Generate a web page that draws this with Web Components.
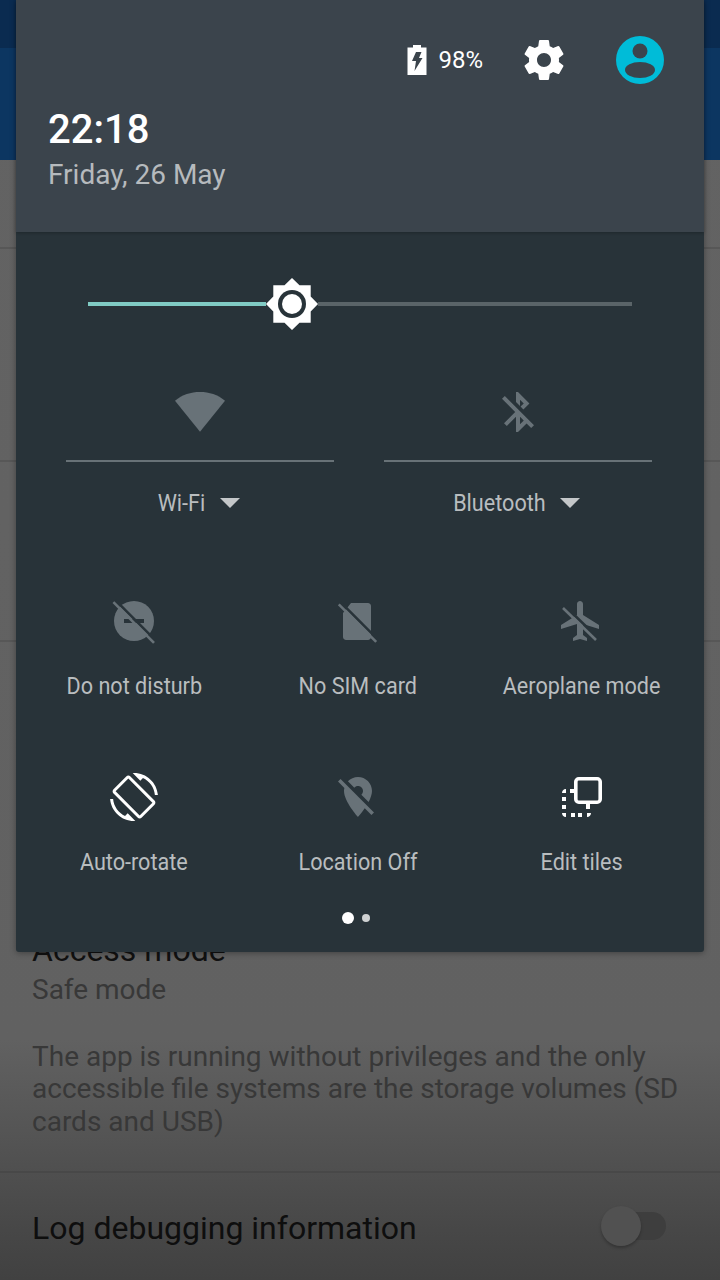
<!DOCTYPE html>
<html>
<head>
<meta charset="utf-8">
<style>
    html, body { margin: 0; padding: 0; }
    body { width: 720px; height: 1280px; overflow: hidden; font-family: Roboto, "Liberation Sans", sans-serif; }
</style>
</head>
<body>
<settings-backdrop>
    <quick-panel></quick-panel>
</settings-backdrop>

<script>
const DIM = '#687278';
const PANEL = '#283339';

// slash used by the "off" tiles: a light bar with a dark gap on its upper right side
const slash = (x1, y1, x2, y2) =>
    `<path stroke="${PANEL}" stroke-width="1.3" d="M${x1 + 1} ${y1 - 1}L${x2 + 1} ${y2 - 1}"/>` +
    `<path stroke="${DIM}" stroke-width="1.3" d="M${x1} ${y1}L${x2} ${y2}"/>`;

const ICONS = {
    gear: '<path fill="#fff" d="M19.43 12.98c.04-.32.07-.64.07-.98s-.03-.66-.07-.98l2.11-1.65c.19-.15.24-.42.12-.64l-2-3.46c-.12-.22-.39-.3-.61-.22l-2.49 1c-.52-.4-1.08-.73-1.69-.98l-.38-2.65C14.46 2.18 14.25 2 14 2h-4c-.25 0-.46.18-.49.42l-.38 2.65c-.61.25-1.17.59-1.69.98l-2.49-1c-.23-.09-.49 0-.61.22l-2 3.46c-.13.22-.07.49.12.64l2.11 1.65c-.04.32-.07.65-.07.98s.03.66.07.98l-2.11 1.65c-.19.15-.24.42-.12.64l2 3.46c.12.22.39.3.61.22l2.49-1c.52.4 1.08.73 1.69.98l.38 2.65c.03.24.24.42.49.42h4c.25 0 .46-.18.49-.42l.38-2.65c.61-.25 1.17-.59 1.69-.98l2.49 1c.23.09.49 0 .61-.22l2-3.46c.12-.22.07-.49-.12-.64l-2.11-1.65zM12 15.5c-1.93 0-3.5-1.57-3.5-3.5s1.57-3.5 3.5-3.5 3.5 1.57 3.5 3.5-1.57 3.5-3.5 3.5z"/>',
    wifi: `<path fill="${DIM}" d="M-.5 6.4C3 3.3 7.5 2 12 2s9 1.3 12.5 4.4L12 21.9z"/>`,
    bluetooth: `<path fill="${DIM}" d="M13 5.83l1.88 1.88-1.6 1.6 1.41 1.41 3.02-3.02L12 2h-1v5.03l2 2v-3.2zM5.41 4L4 5.41 10.59 12 5 17.59 6.41 19 11 14.41V22h1l4.29-4.29 2.3 2.29L20 18.59 5.41 4zM13 18.17v-3.76l1.88 1.88L13 18.17z"/>`,
    dnd: `<circle cx="12" cy="12" r="10" fill="${DIM}"/><path fill="${PANEL}" d="M7 11h10v2H7z"/>` + slash(1.7, 2.6, 22, 22.9),
    sim: `<path fill="${DIM}" d="M8.5 3H17c.8 0 1.5.7 1.5 1.5V20c0 .8-.7 1.5-1.5 1.5H6c-.8 0-1.5-.7-1.5-1.5V8z"/>` + slash(2.4, 3.7, 21.1, 22.4),
    plane: `<path fill="${DIM}" transform="translate(-1)" d="M21.5 16v-2l-8-5V3.5c0-.83-.67-1.5-1.5-1.5s-1.5.67-1.5 1.5V9l-8 5v2l8-2.5V19l-2 1.5V22l3.5-1 3.5 1v-1.5l-2-1.5v-5.5l8 2.5z"/>` + slash(2.5, 5.5, 19, 21.5),
    rotate: '<path fill="#fff" d="M16.48 2.52c3.27 1.55 5.61 4.72 5.97 8.48h1.5C23.44 4.84 18.29 0 12 0l-.66.03 3.81 3.81 1.33-1.32zm-6.25-.77c-.59-.59-1.54-.59-2.12 0L1.75 8.11c-.59.59-.59 1.54 0 2.12l12.02 12.02c.59.59 1.54.59 2.12 0l6.36-6.36c.59-.59.59-1.54 0-2.12L10.23 1.75zm4.6 19.44L2.81 9.17l6.36-6.36 12.02 12.02-6.36 6.36zm-7.31.29C4.25 19.94 1.91 16.76 1.55 13H.05C.56 19.16 5.71 24 12 24l.66-.03-3.81-3.81-1.33 1.32z"/>',
    location: `<path fill="${DIM}" d="M12 6.5c1.38 0 2.5 1.12 2.5 2.5 0 .74-.33 1.39-.83 1.85l3.63 3.63c.98-1.86 1.7-3.8 1.7-5.48 0-3.87-3.13-7-7-7-1.98 0-3.76.83-5.04 2.15l3.19 3.19c.46-.52 1.11-.84 1.85-.84zm4.37 9.6l-4.63-4.63-.11-.11L3.27 3 2 4.27l3.18 3.18C5.07 7.95 5 8.47 5 9c0 5.25 7 13 7 13s1.67-1.85 3.38-4.35L18.73 21 20 19.73l-3.63-3.63z"/>`,
    edit: '<rect x="8.9" y="2.9" width="12.2" height="11.7" rx="1.5" stroke="#fff" stroke-width="1.8"/><path fill="#fff" d="M6 8h2.5v2H6zM14 15h2v3h-2zM2 10c0-1 .7-2 2-2v2zM2 12h2v2H2zM2 16h2v2H2zM2 20h2v2c-1.3 0-2-1-2-2zM6.5 20h2v2h-2zM10 20h2v2h-2zM14.5 20h2c0 1-.7 2-2 2z"/>'
};

class SettingsBackdrop extends HTMLElement {
    constructor() {
        super();
        const shadow = this.attachShadow({ mode: 'open' });
        shadow.innerHTML = `
            <style>
                :host {
                    display: block;
                    position: relative;
                    width: 720px;
                    height: 1280px;
                    overflow: hidden;
                    background: linear-gradient(#636363 0, #616161 1040px, #555 1130px, #474747 1230px, #414141 1280px);
                }
                .status { height: 48px; background: #0a2b50; }
                .appbar { height: 112px; background: #0c3661; }
                .row { border-bottom: 2px solid #575757; box-sizing: border-box; }
                .access { padding: 0 32px; height: 531px; display: flex; flex-direction: column; justify-content: flex-end; border-bottom-color: #484848; }
                h2 { margin: 0; font: 400 32px/36px Roboto, sans-serif; color: #111; }
                .sub { font-size: 28px; line-height: 32.5px; color: #383838; }
                .sub.name { margin: 6px 0 34px; }
                .sub.desc { padding-bottom: 33px; }
                .log { display: flex; justify-content: space-between; align-items: center; padding: 0 54px 0 32px; height: 107px; }
                .log span { font-size: 32px; color: #0e0e0e; position: relative; top: 1px; }
                toggle-off { position: relative; top: -1px; }
            </style>
            <div class="status"></div>
            <div class="appbar"></div>
            <div class="row" style="height:89px"></div>
            <div class="row" style="height:213px"></div>
            <div class="row" style="height:180px"></div>
            <div class="row access">
                <h2>Access mode</h2>
                <div class="sub name">Safe mode</div>
                <div class="sub desc">The app is running without privileges and the only accessible file systems are the storage volumes (SD cards and USB)</div>
            </div>
            <div class="log">
                <span>Log debugging information</span>
                <toggle-off></toggle-off>
            </div>
            <slot></slot>
        `;
    }
}

class ToggleOff extends HTMLElement {
    constructor() {
        super();
        const shadow = this.attachShadow({ mode: 'open' });
        shadow.innerHTML = `
            <style>
                :host { display: flex; align-items: center; width: 65px; height: 40px; }
                .track { width: 100%; height: 28px; margin-left: 10px; border-radius: 14px; background: #3e3e3e; }
                .thumb { position: absolute; left: 0; top: 0; width: 40px; height: 40px; border-radius: 50%; background: #515151; box-shadow: 0 2px 3px rgba(0,0,0,.25); }
            </style>
            <div class="track"></div>
            <div class="thumb"></div>
        `;
    }
}

class PanelHeader extends HTMLElement {
    constructor() {
        super();
        const shadow = this.attachShadow({ mode: 'open' });
        shadow.innerHTML = `
            <style>
                :host {
                    display: block;
                    height: 232px;
                    box-sizing: border-box;
                    padding: 36px 40px 0 32px;
                    background: #3b444c;
                    box-shadow: 0 1px 3px rgba(0,0,0,.25);
                    position: relative;
                    color: #fff;
                }
                .top { display: flex; align-items: center; justify-content: flex-end; height: 48px; }
                .pct { font-size: 24px; margin: 0 37px 0 11px; }
                svg { display: block; }
                .time { font-size: 40px; font-weight: 500; line-height: 48px; margin-top: 22px; }
                .date { font-size: 28px; line-height: 36px; margin-top: 3px; color: #b6babd; }
            </style>
            <div class="top">
                <svg width="20" height="30" viewBox="0 0 20 30"><path fill="#fff" d="M6 0h8v2.5h5.5V30H.5V2.5H6z"/><path fill="#3b444c" d="M9 7h5.5L12 13h3.5L7.5 26 9 16H5z"/></svg>
                <span class="pct">98%</span>
                <svg width="48" height="48" viewBox="0 0 24 24">${ICONS.gear}</svg>
                <svg width="48" height="48" viewBox="0 0 48 48" style="margin-left:48px"><circle cx="24" cy="24" r="24" fill="#00bcd8"/><circle cx="24" cy="15" r="7.5" fill="#3b444c"/><ellipse cx="24" cy="34" rx="15" ry="8" fill="#3b444c"/></svg>
            </div>
            <div class="time">22:18</div>
            <div class="date">Friday, 26 May</div>
        `;
    }
}

class BrightnessSlider extends HTMLElement {
    constructor() {
        super();
        const shadow = this.attachShadow({ mode: 'open' });
        shadow.innerHTML = `
            <style>
                :host { display: flex; align-items: center; height: 52px; margin: 0 72px; }
                .on { width: 178px; height: 4px; background: #80cbc4; }
                .off { flex: 1; height: 4px; background: #5a6468; }
                svg { display: block; flex: none; }
            </style>
            <div class="on"></div>
            <svg width="52" height="52" viewBox="0 0 52 52">
                <path fill="#fff" d="M26 0l7.5 7.3H44.7V18.500L52 26l-7.3 7.5V44.7H33.5L26 52l-7.5-7.3H7.3V33.5L0 26l7.3-7.5V7.3H18.5z"/>
                <circle cx="26" cy="26" r="14" fill="${PANEL}"/>
                <circle cx="26" cy="26" r="10" fill="#fff"/>
            </svg>
            <div class="off"></div>
        `;
    }
}

class QsTile extends HTMLElement {
    constructor() {
        super();
        const big = this.hasAttribute('big');
        const trim = this.getAttribute('trim') || 0;
        const shadow = this.attachShadow({ mode: 'open' });
        shadow.innerHTML = `
            <style>
                :host { display: flex; flex-direction: column; align-items: center; }
                svg { display: block; overflow: visible; }
                .icon { width: 48px; height: 48px; }
                hr { width: 100%; height: 2px; margin: 24px 0 0; border: 0; background: #687277; }
                .label {
                    display: flex;
                    align-items: center;
                    justify-content: center;
                    margin: ${big ? '25px 0 0 -2px' : '25px 0 0'};
                    height: 32px;
                    font-size: 24px;
                    white-space: nowrap;
                    color: #b9bdbf;
                }
                .label span { display: inline-block; transform: scaleX(.9); margin: 0 -${trim}px; }
                .caret { width: 0; height: 0; margin-left: 15px; border: 10px solid transparent; border-top-color: #c4c7c9; border-bottom: 0; }
            </style>
            <svg class="icon" viewBox="0 0 24 24" fill="none">${ICONS[this.getAttribute('icon')]}</svg>
            ${big ? '<hr>' : ''}
            <div class="label"><span>${this.getAttribute('label')}</span>${big ? '<i class="caret"></i>' : ''}</div>
        `;
    }
}

class QuickPanel extends HTMLElement {
    constructor() {
        super();
        const shadow = this.attachShadow({ mode: 'open' });
        shadow.innerHTML = `
            <style>
                :host {
                    display: block;
                    position: absolute;
                    left: 16px;
                    top: 0;
                    width: 688px;
                    height: 952px;
                    background: ${PANEL};
                    border-radius: 0 0 3px 3px;
                    box-shadow: 0 1px 6px rgba(0,0,0,.35);
                }
                .body { padding-top: 46px; }
                .dual { display: grid; grid-template-columns: 268px 268px; gap: 50px; margin: 58px 0 0 50px; }
                .grid { display: grid; grid-template-columns: repeat(3, 224px); row-gap: 71px; margin: 78px 0 0 6px; }
                .pager { display: flex; align-items: center; justify-content: center; gap: 8px; margin: 34px 8px 0 0; height: 12px; }
                .pager i { width: 12px; height: 12px; border-radius: 50%; background: #fff; }
                .pager i + i { width: 8px; height: 8px; background: #cfd2d3; }
            </style>
            <panel-header></panel-header>
            <div class="body">
                <brightness-slider></brightness-slider>
                <div class="dual">
                    <qs-tile big trim="3" icon="wifi" label="Wi-Fi"></qs-tile>
                    <qs-tile big trim="5.5" icon="bluetooth" label="Bluetooth"></qs-tile>
                </div>
                <div class="grid">
                    <qs-tile icon="dnd" label="Do not disturb"></qs-tile>
                    <qs-tile icon="sim" label="No SIM card"></qs-tile>
                    <qs-tile icon="plane" label="Aeroplane mode"></qs-tile>
                    <qs-tile icon="rotate" label="Auto-rotate"></qs-tile>
                    <qs-tile icon="location" label="Location Off"></qs-tile>
                    <qs-tile icon="edit" label="Edit tiles"></qs-tile>
                </div>
                <div class="pager"><i></i><i></i></div>
            </div>
        `;
    }
}

customElements.define('settings-backdrop', SettingsBackdrop);
customElements.define('toggle-off', ToggleOff);
customElements.define('panel-header', PanelHeader);
customElements.define('brightness-slider', BrightnessSlider);
customElements.define('qs-tile', QsTile);
customElements.define('quick-panel', QuickPanel);
</script>
</body>
</html>
